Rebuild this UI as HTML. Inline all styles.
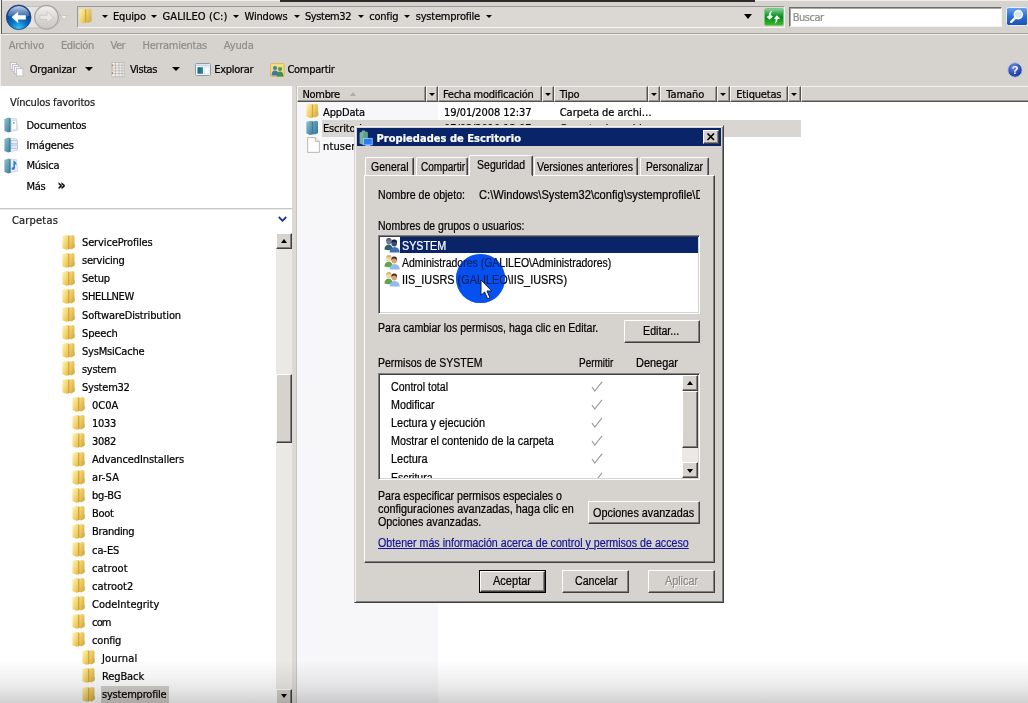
<!DOCTYPE html>
<html lang="es">
<head>
<meta charset="utf-8">
<title>systemprofile</title>
<style>
*{box-sizing:border-box;margin:0;padding:0}
html,body{width:1028px;height:703px;overflow:hidden;background:#fff}
body{position:relative;font-family:"DejaVu Sans Condensed","DejaVu Sans","Liberation Sans",sans-serif;font-size:11px;color:#000;line-height:14px}
#root{position:absolute;left:0;top:0;width:1028px;height:703px;overflow:hidden;will-change:transform}
.a{position:absolute}
.t{position:absolute;white-space:nowrap;line-height:14px;height:14px;transform-origin:0 50%;-webkit-text-stroke:0.22px currentColor}
svg{position:absolute;overflow:visible}
#chrome{left:0;top:0;width:1028px;height:86px;background:#d6d3ce}
.dd{position:absolute;width:0;height:0;border-left:3.5px solid transparent;border-right:3.5px solid transparent;border-top:4px solid #000}
.dd2{position:absolute;width:0;height:0;border-left:4.5px solid transparent;border-right:4.5px solid transparent;border-top:5px solid #000}
.dd0{position:absolute;width:0;height:0;border-left:3.1px solid transparent;border-right:3.1px solid transparent;border-top:3.6px solid #000}
.dd3{position:absolute;width:0;height:0;border-left:4px solid transparent;border-right:4px solid transparent;border-top:4.5px solid #000}
.btn{position:absolute;background:#d6d3ce;border:1px solid;border-color:#fff #404040 #404040 #fff;box-shadow:inset -1px -1px 0 #808080, inset 1px 1px 0 #d6d3ce}
.sunk{position:absolute;background:#fff;border:1px solid;border-color:#808080 #fff #fff #808080;box-shadow:inset 1px 1px 0 #404040, inset -1px -1px 0 #d6d3ce}
.hdr{position:absolute;top:86px;height:16px;background:#d6d3ce;border:1px solid;border-color:#f4f3f1 #55534f #55534f #f4f3f1;box-shadow:inset -1px -1px 0 #99968f}
.tab{position:absolute;background:#d6d3ce;border:1px solid;border-color:#fff #404040 transparent #fff;border-bottom:none;border-radius:2px 2px 0 0;box-shadow:inset -1px 0 0 #808080}
</style>
</head>
<body>
<svg width="0" height="0" style="left:-10px;top:-10px">
<defs>
<linearGradient id="gfl" x1="0" y1="0" x2="1" y2="1"><stop offset="0" stop-color="#fff4ba"/><stop offset="0.5" stop-color="#f5d974"/><stop offset="1" stop-color="#e0b548"/></linearGradient>
<linearGradient id="gfr" x1="0" y1="0" x2="1" y2="1"><stop offset="0" stop-color="#f8e08a"/><stop offset="0.55" stop-color="#e6bf54"/><stop offset="1" stop-color="#cf9f38"/></linearGradient>
<linearGradient id="gtl" x1="0" y1="0" x2="1" y2="1"><stop offset="0" stop-color="#8fc0c8"/><stop offset="0.55" stop-color="#5f9fb4"/><stop offset="1" stop-color="#3f7e96"/></linearGradient>
<linearGradient id="gtr" x1="0" y1="0" x2="1" y2="1"><stop offset="0" stop-color="#6aa7c4"/><stop offset="0.6" stop-color="#4a88b0"/><stop offset="1" stop-color="#356c94"/></linearGradient>
<symbol id="fold" viewBox="0 0 14 16">
<path d="M7.2,1.2 L11.3,0.4 L12.9,1.6 L12.9,13.6 L9.6,15.4 L7.2,14.8 Z" fill="url(#gfr)"/>
<path d="M12.2,9.5 L13.6,10 L13.6,12.6 L12.2,13.4 Z" fill="#b9c98a"/>
<path d="M0.4,1.6 L5.6,0.4 L7.2,1.2 L7.2,15.2 L4.4,15.8 L0.4,14.2 Z" fill="url(#gfl)"/>
<path d="M6.4,1 L7.6,1.3 L7.6,15 L6.4,15.4 Z" fill="#c99a32" opacity="0.85"/>
</symbol>
<symbol id="tfold" viewBox="0 0 14 16">
<path d="M7.2,1.2 L11.3,0.4 L12.9,1.6 L12.9,13.6 L9.6,15.4 L7.2,14.8 Z" fill="url(#gtr)"/>
<path d="M0.4,1.6 L5.6,0.4 L7.2,1.2 L7.2,15.2 L4.4,15.8 L0.4,14.2 Z" fill="url(#gtl)"/>
<path d="M6.4,1 L7.6,1.3 L7.6,15 L6.4,15.4 Z" fill="#2f6c88" opacity="0.75"/>
</symbol>
</defs>
</svg>
<div id="root">
<div id="chrome" class="a"></div>
<div class="a" style="left:0px;top:0px;width:1028px;height:1px;background:#efeeec;"></div>
<div class="a" style="left:0px;top:0px;width:1px;height:86px;background:#efeeec;"></div>
<div class="a" style="left:1px;top:0px;width:1px;height:34px;background:#5a5853;"></div>
<div class="a" style="left:280px;top:0px;width:475px;height:2px;background:#2c2b29;"></div>
<div class="a" style="left:2px;top:33px;width:1026px;height:1px;background:#a3a19c;"></div>
<div class="a" style="left:0px;top:34px;width:1028px;height:1px;background:#f1f0ee;"></div>
<svg style="left:4px;top:3px" width="70" height="30" viewBox="0 0 70 30">
<defs>
<radialGradient id="gb" cx="0.5" cy="0.95" r="0.75"><stop offset="0" stop-color="#39c4f5"/><stop offset="0.45" stop-color="#0a73c4"/><stop offset="1" stop-color="#0a3c8c"/></radialGradient>
<linearGradient id="gbh" x1="0" y1="0" x2="0" y2="1"><stop offset="0" stop-color="#fff" stop-opacity="0.75"/><stop offset="1" stop-color="#fff" stop-opacity="0.08"/></linearGradient>
<linearGradient id="gf" x1="0" y1="0" x2="0" y2="1"><stop offset="0" stop-color="#f3f2f0"/><stop offset="0.5" stop-color="#dcdad6"/><stop offset="1" stop-color="#c9c7c2"/></linearGradient>
</defs>
<rect x="4" y="3.5" width="52" height="21.5" rx="10.5" fill="#e6e4e0" stroke="#c3c0bb" stroke-width="1"/>
<circle cx="14.7" cy="14.3" r="12.3" fill="url(#gb)" stroke="#1d3f7c" stroke-width="0.8"/>
<path d="M3.6,12.8 A11.2,11.2 0 0 1 25.8,12.8 Q14.7,16.6 3.6,12.8 Z" fill="url(#gbh)"/>
<path d="M7.6,14.3 L14.2,8.4 L14.2,12.2 L21.8,12.2 L21.8,16.4 L14.2,16.4 L14.2,20.2 Z" fill="#fff"/>
<circle cx="42.5" cy="14.3" r="11.8" fill="url(#gf)" stroke="#a9a7a3" stroke-width="1.3"/>
<path d="M49.4,14.3 L43,8.6 L43,12.3 L35.8,12.3 L35.8,16.3 L43,16.3 L43,20 Z" fill="#e9e8e5" stroke="#c5c3bf" stroke-width="0.7"/>
<path d="M56.6,12.6 L63.6,12.6 L60.1,16.6 Z" fill="#f4f3f1" stroke="#b9b7b3" stroke-width="0.7"/>
</svg>
<div class="a" style="left:77px;top:6px;width:708px;height:22px;background:#dbd8d3;border:1px solid;border-color:#9a9893 #f3f2f0 #f8f7f6 #9a9893"></div>
<svg style="left:79px;top:7.55px" width="13.5" height="15.5"><use href="#fold"/></svg>
<div class="dd0" style="left:102.15px;top:14.8px;"></div>
<div class="dd0" style="left:150.9px;top:14.8px;"></div>
<div class="dd0" style="left:232.9px;top:14.8px;"></div>
<div class="dd0" style="left:293.65px;top:14.8px;"></div>
<div class="dd0" style="left:358.15px;top:14.8px;"></div>
<div class="dd0" style="left:404.4px;top:14.8px;"></div>
<div class="dd0" style="left:486.15px;top:14.8px;"></div>
<div class="dd2" style="left:743.9px;top:14.3px;"></div>
<svg style="left:763.5px;top:7.5px" width="20" height="18" viewBox="0 0 20 18">
<defs><linearGradient id="gg" x1="0" y1="0" x2="0" y2="1"><stop offset="0" stop-color="#8fd69a"/><stop offset="0.38" stop-color="#1d9a36"/><stop offset="0.55" stop-color="#0a8a1e"/><stop offset="1" stop-color="#42bb26"/></linearGradient></defs>
<rect x="0.5" y="0.5" width="19" height="17" rx="1.8" fill="url(#gg)" stroke="#7cc884" stroke-width="1"/>
<path d="M8.6,2.6 Q6.4,4.8 6.9,7 L9,8.6 L5.7,11.7 L2.6,9 L5,7.3 Q4.4,4 8.6,2.6 Z" fill="#fff" opacity="0.95"/>
<path d="M12.8,7.2 L16.3,10.7 L13.7,11 Q13.6,13.9 10.8,15.7 Q12,13 11.6,11 L9.8,10.8 Z" fill="#fff" opacity="0.95"/>
</svg>
<div class="a" style="left:789px;top:7px;width:213px;height:20px;background:#fff;border:1px solid;border-color:#6f6d69 #f4f3f1 #f4f3f1 #6f6d69;box-shadow:inset 1px 1px 0 #a9a7a2"></div>
<svg style="left:1006px;top:7px" width="22" height="19" viewBox="0 0 22 19">
<defs><linearGradient id="gs" x1="0" y1="0" x2="0" y2="1"><stop offset="0" stop-color="#6aa6f0"/><stop offset="0.5" stop-color="#2a6fd8"/><stop offset="1" stop-color="#1b4fb0"/></linearGradient></defs>
<rect x="0.5" y="0.5" width="21" height="18" rx="2" fill="url(#gs)" stroke="#e8eefc" stroke-width="1"/>
<circle cx="12.3" cy="7.6" r="4" fill="#cfe4ff" stroke="#fff" stroke-width="1.6"/>
<path d="M9.4,10.6 L5.2,14.8" stroke="#fff" stroke-width="2.4" stroke-linecap="round"/>
</svg>
<svg style="left:1007px;top:61.5px" width="16" height="16" viewBox="0 0 16 16">
<defs><radialGradient id="gh" cx="0.4" cy="0.3" r="0.8"><stop offset="0" stop-color="#6f8fe0"/><stop offset="0.6" stop-color="#2a4bb4"/><stop offset="1" stop-color="#1a2f86"/></radialGradient></defs>
<circle cx="8" cy="8" r="7.2" fill="url(#gh)" stroke="#b8c2e2" stroke-width="1"/>
<text x="8" y="12" text-anchor="middle" font-family="Liberation Sans, sans-serif" font-weight="bold" font-size="11" fill="#fff">?</text>
</svg>
<svg style="left:10px;top:62px" width="14" height="15" viewBox="0 0 14 15">
<rect x="0.5" y="0.5" width="6" height="7" fill="#f4f4f4" stroke="#b9b9c4" stroke-width="0.8"/>
<rect x="2.5" y="2.5" width="6" height="7" fill="#f4f4f4" stroke="#b9b9c4" stroke-width="0.8"/>
<rect x="4.5" y="4.5" width="6" height="7" fill="#f6f6f6" stroke="#b9b9c4" stroke-width="0.8"/>
<rect x="6.5" y="6.5" width="6.5" height="7.5" fill="#fafafa" stroke="#b9b9c4" stroke-width="0.8"/>
</svg>
<div class="dd3" style="left:85.3px;top:66.95px;"></div>
<svg style="left:111px;top:61.6px" width="14" height="15.4" viewBox="0 0 14 14" preserveAspectRatio="none">
<rect x="0.8" y="0.5" width="12.4" height="13" fill="#efeeec" stroke="#bdbbb6" stroke-width="0.8"/>
<path d="M4.5,0.5V13.5M8,0.5V13.5M11,0.5V13.5M1,3H13M1,5.5H13M1,8H13M1,10.5H13" stroke="#b4b2ad" stroke-width="0.7" fill="none"/>
<path d="M1.3,2.2V4M1.3,9V11" stroke="#c8665a" stroke-width="1"/>
<path d="M1.3,5.6V7.6" stroke="#d8c24a" stroke-width="1"/>
</svg>
<div class="dd3" style="left:172.25px;top:66.95px;"></div>
<svg style="left:194.5px;top:62.5px" width="16" height="13" viewBox="0 0 16 13">
<rect x="0.5" y="0.5" width="15" height="12" rx="1" fill="#f4f6f8" stroke="#8f9aa8" stroke-width="1"/>
<rect x="1.5" y="1.5" width="13" height="1.6" fill="#c8d4e4"/>
<rect x="2.4" y="4.2" width="5.6" height="6.6" fill="#2f8a78"/>
<rect x="3" y="4.8" width="2.6" height="5.4" fill="#2a5fae"/>
<rect x="9.6" y="4.2" width="4.4" height="6.6" fill="#fff" stroke="#c9d1dc" stroke-width="0.5"/>
</svg>
<svg style="left:269.5px;top:63px" width="15" height="14" viewBox="0 0 15 14">
<rect x="0.5" y="0.5" width="13.5" height="13" rx="1" fill="#f5dc7c" stroke="#d9b548" stroke-width="0.8"/>
<circle cx="5" cy="5" r="2.1" fill="#3f7fc0"/><path d="M1.6,12.6 Q1.6,7.6 5,7.6 Q8.4,7.6 8.4,12.6 Z" fill="#3a74b6"/>
<circle cx="10" cy="6" r="2.1" fill="#4a9a5a"/><path d="M6.6,13.4 Q6.6,8.6 10,8.6 Q13.4,8.6 13.4,13.4 Z" fill="#3f8f52"/>
</svg>
<div class="a" style="left:0px;top:86px;width:292px;height:617px;background:#fff;"></div>
<svg style="left:4px;top:117.0px" width="15" height="16" viewBox="0 0 15 16">
<path d="M5.6,1 L12.6,1.8 L13.6,13.2 L6,14.6 Z" fill="#e9edf2" stroke="#b9bec8" stroke-width="0.5"/>
<rect x="7.6" y="3.6" width="4.6" height="9" fill="#fff" stroke="#c9ccd4" stroke-width="0.5"/><rect x="9" y="5" width="1.6" height="1.6" fill="#6a9fd8"/>
<path d="M0.4,2 L4.6,0.6 L6.4,1.4 L6.4,14.8 L4.2,15.6 L0.4,14 Z" fill="url(#gtl)"/>
<path d="M5.4,1 L6.6,1.4 L6.6,14.8 L5.4,15.2 Z" fill="#2f6c88" opacity="0.7"/>
</svg>
<svg style="left:4px;top:137.0px" width="15" height="16" viewBox="0 0 15 16">
<path d="M5.6,1 L12.6,1.8 L13.6,13.2 L6,14.6 Z" fill="#e9edf2" stroke="#b9bec8" stroke-width="0.5"/>
<rect x="7" y="3.4" width="6.4" height="3.4" fill="#e8f0fa" stroke="#8fa8c8" stroke-width="0.5"/><rect x="7" y="8" width="6.4" height="3.6" fill="#dbe8f6" stroke="#8fa8c8" stroke-width="0.5"/>
<path d="M0.4,2 L4.6,0.6 L6.4,1.4 L6.4,14.8 L4.2,15.6 L0.4,14 Z" fill="url(#gtl)"/>
<path d="M5.4,1 L6.6,1.4 L6.6,14.8 L5.4,15.2 Z" fill="#2f6c88" opacity="0.7"/>
</svg>
<svg style="left:4px;top:157.5px" width="15" height="16" viewBox="0 0 15 16">
<path d="M5.6,1 L12.6,1.8 L13.6,13.2 L6,14.6 Z" fill="#e9edf2" stroke="#b9bec8" stroke-width="0.5"/>
<path d="M9.4,2.6 Q12.8,3.6 12.4,7.4 L11,6 L11,10 Q11,12 9,12 Q7.4,12 7.4,10.6 Q7.4,9.2 9,9.2 L9.4,9.2 Z" fill="#2f7fe0"/>
<path d="M0.4,2 L4.6,0.6 L6.4,1.4 L6.4,14.8 L4.2,15.6 L0.4,14 Z" fill="url(#gtl)"/>
<path d="M5.4,1 L6.6,1.4 L6.6,14.8 L5.4,15.2 Z" fill="#2f6c88" opacity="0.7"/>
</svg>
<div class="a" style="left:0px;top:208px;width:293px;height:1px;background:#c9c7c3;"></div>
<div class="a" style="left:0px;top:209px;width:293px;height:1px;background:#ecebe9;"></div>
<svg style="left:277.5px;top:215.5px" width="9" height="7" viewBox="0 0 9 7"><path d="M0.8,1 L4.5,4.8 L8.2,1" fill="none" stroke="#1a2f9c" stroke-width="1.8"/></svg>
<div class="a" style="left:100.5px;top:686px;width:68.5px;height:17px;background:#d3d0cb;"></div>
<svg style="left:62px;top:233.55px" width="13.5" height="16.5"><use href="#fold"/></svg>
<svg style="left:62px;top:251.63px" width="13.5" height="16.5"><use href="#fold"/></svg>
<svg style="left:62px;top:269.71px" width="13.5" height="16.5"><use href="#fold"/></svg>
<svg style="left:62px;top:287.79px" width="13.5" height="16.5"><use href="#fold"/></svg>
<svg style="left:62px;top:305.87px" width="13.5" height="16.5"><use href="#fold"/></svg>
<svg style="left:62px;top:323.95px" width="13.5" height="16.5"><use href="#fold"/></svg>
<svg style="left:62px;top:342.03px" width="13.5" height="16.5"><use href="#fold"/></svg>
<svg style="left:62px;top:360.11px" width="13.5" height="16.5"><use href="#fold"/></svg>
<svg style="left:62px;top:378.19px" width="13.5" height="16.5"><use href="#fold"/></svg>
<svg style="left:72px;top:396.27px" width="13.5" height="16.5"><use href="#fold"/></svg>
<svg style="left:72px;top:414.35px" width="13.5" height="16.5"><use href="#fold"/></svg>
<svg style="left:72px;top:432.43px" width="13.5" height="16.5"><use href="#fold"/></svg>
<svg style="left:72px;top:450.51px" width="13.5" height="16.5"><use href="#fold"/></svg>
<svg style="left:72px;top:468.59px" width="13.5" height="16.5"><use href="#fold"/></svg>
<svg style="left:72px;top:486.67px" width="13.5" height="16.5"><use href="#fold"/></svg>
<svg style="left:72px;top:504.75px" width="13.5" height="16.5"><use href="#fold"/></svg>
<svg style="left:72px;top:522.83px" width="13.5" height="16.5"><use href="#fold"/></svg>
<svg style="left:72px;top:540.91px" width="13.5" height="16.5"><use href="#fold"/></svg>
<svg style="left:72px;top:558.99px" width="13.5" height="16.5"><use href="#fold"/></svg>
<svg style="left:72px;top:577.07px" width="13.5" height="16.5"><use href="#fold"/></svg>
<svg style="left:72px;top:595.15px" width="13.5" height="16.5"><use href="#fold"/></svg>
<svg style="left:72px;top:613.23px" width="13.5" height="16.5"><use href="#fold"/></svg>
<svg style="left:72px;top:631.31px" width="13.5" height="16.5"><use href="#fold"/></svg>
<svg style="left:82px;top:649.39px" width="13.5" height="16.5"><use href="#fold"/></svg>
<svg style="left:82px;top:667.47px" width="13.5" height="16.5"><use href="#fold"/></svg>
<svg style="left:82px;top:685.55px" width="13.5" height="16.5"><use href="#fold"/></svg>
<div class="a" style="left:276px;top:233px;width:16px;height:470px;background:#ebe9e5;"></div>
<div class="btn" style="left:276px;top:233px;width:16px;height:16px"></div>
<div class="dd" style="left:280.5px;top:238.5px;border-top:none;border-bottom:4px solid #000"></div>
<div class="btn" style="left:276px;top:374px;width:16px;height:69px"></div>
<div class="btn" style="left:276px;top:689px;width:16px;height:16px"></div>
<div class="dd" style="left:280.5px;top:693.5px;"></div>
<div class="a" style="left:292px;top:86px;width:5px;height:617px;background:#dddad6;"></div>
<div class="a" style="left:296px;top:86px;width:1px;height:617px;background:#c8c5c0;"></div>
<div class="a" style="left:297px;top:102px;width:141px;height:601px;background:#f7f7f9;"></div>
<div class="a" style="left:438px;top:102px;width:590px;height:601px;background:#fff;"></div>
<div class="a" style="left:297px;top:86px;width:731px;height:16px;background:#d6d3ce;"></div>
<div class="hdr" style="left:297px;width:129px"></div>
<div class="hdr" style="left:426px;width:12px"></div>
<div class="dd0" style="left:428.9px;top:92.8px;"></div>
<div class="hdr" style="left:438px;width:104px"></div>
<div class="hdr" style="left:542px;width:12px"></div>
<div class="dd0" style="left:544.9px;top:92.8px;"></div>
<div class="hdr" style="left:554px;width:94px"></div>
<div class="hdr" style="left:648px;width:12px"></div>
<div class="dd0" style="left:650.9px;top:92.8px;"></div>
<div class="hdr" style="left:660px;width:57px"></div>
<div class="hdr" style="left:717px;width:13px"></div>
<div class="dd0" style="left:720.4px;top:92.8px;"></div>
<div class="hdr" style="left:730px;width:58px"></div>
<div class="hdr" style="left:788px;width:13px"></div>
<div class="dd0" style="left:791.4px;top:92.8px;"></div>
<div class="hdr" style="left:801px;width:229px"></div>
<div class="dd" style="left:349.5px;top:92px;border-top:none;border-bottom:4px solid #aeaba6"></div>
<div class="a" style="left:322px;top:120px;width:479px;height:17px;background:#d9d6d1;"></div>
<svg style="left:306.3px;top:102.55px" width="13" height="15.5"><use href="#fold"/></svg>
<svg style="left:306.3px;top:119.95px" width="13" height="15.5"><use href="#tfold"/></svg>
<svg style="left:307px;top:137px" width="13" height="16" viewBox="0 0 13 16">
<path d="M0.6,0.6 L8.4,0.6 L12.4,4.6 L12.4,15.4 L0.6,15.4 Z" fill="#fdfdfd" stroke="#b4b2ae" stroke-width="0.9"/>
<path d="M8.4,0.6 L8.4,4.6 L12.4,4.6" fill="#eceae6" stroke="#b4b2ae" stroke-width="0.8"/>
</svg>
<span class="t" style="left:113px;top:10.00px;letter-spacing:-0.193px;">Equipo</span>
<span class="t" style="left:162.5px;top:10.00px;letter-spacing:0.122px;">GALILEO (C:)</span>
<span class="t" style="left:244.5px;top:10.00px;letter-spacing:-0.165px;">Windows</span>
<span class="t" style="left:305px;top:10.00px;letter-spacing:-0.438px;">System32</span>
<span class="t" style="left:369.25px;top:10.00px;letter-spacing:-0.216px;">config</span>
<span class="t" style="left:415.75px;top:10.00px;letter-spacing:-0.213px;">systemprofile</span>
<span class="t" style="left:792.7px;top:11.00px;color:#8d8b87;letter-spacing:-0.466px;">Buscar</span>
<span class="t" style="left:8.75px;top:39.00px;color:#8f8d88;letter-spacing:-0.246px;">Archivo</span>
<span class="t" style="left:61px;top:39.00px;color:#8f8d88;letter-spacing:-0.438px;">Edición</span>
<span class="t" style="left:110.5px;top:39.00px;color:#8f8d88;letter-spacing:-0.526px;">Ver</span>
<span class="t" style="left:142.5px;top:39.00px;color:#8f8d88;letter-spacing:-0.242px;">Herramientas</span>
<span class="t" style="left:223.75px;top:39.00px;color:#8f8d88;letter-spacing:-0.100px;">Ayuda</span>
<span class="t" style="left:29.75px;top:63.00px;letter-spacing:-0.234px;">Organizar</span>
<span class="t" style="left:130px;top:63.00px;letter-spacing:-0.422px;">Vistas</span>
<span class="t" style="left:214.25px;top:63.00px;letter-spacing:-0.299px;">Explorar</span>
<span class="t" style="left:287.5px;top:63.00px;letter-spacing:-0.302px;">Compartir</span>
<span class="t" style="left:10px;top:96.00px;color:#1c1c1c;letter-spacing:-0.165px;">Vínculos favoritos</span>
<span class="t" style="left:26.5px;top:119.00px;letter-spacing:-0.273px;">Documentos</span>
<span class="t" style="left:26.5px;top:139.00px;letter-spacing:-0.160px;">Imágenes</span>
<span class="t" style="left:26.5px;top:159.00px;letter-spacing:-0.247px;">Música</span>
<span class="t" style="left:26.5px;top:180.00px;letter-spacing:-0.255px;">Más</span>
<span class="t" style="left:57.5px;top:177.60px;font-size:14px;font-weight:bold;letter-spacing:-0.170px;letter-spacing:0;">»</span>
<span class="t" style="left:12px;top:214.00px;color:#1c1c1c;letter-spacing:0.186px;">Carpetas</span>
<span class="t" style="left:82px;top:236.20px;letter-spacing:-0.131px;">ServiceProfiles</span>
<span class="t" style="left:82px;top:254.28px;letter-spacing:-0.241px;">servicing</span>
<span class="t" style="left:82px;top:272.36px;letter-spacing:-0.163px;">Setup</span>
<span class="t" style="left:82px;top:290.44px;letter-spacing:-0.307px;">SHELLNEW</span>
<span class="t" style="left:82px;top:308.52px;letter-spacing:-0.116px;">SoftwareDistribution</span>
<span class="t" style="left:82px;top:326.60px;letter-spacing:-0.128px;">Speech</span>
<span class="t" style="left:82px;top:344.68px;letter-spacing:-0.194px;">SysMsiCache</span>
<span class="t" style="left:82px;top:362.76px;letter-spacing:-0.297px;">system</span>
<span class="t" style="left:82px;top:380.84px;letter-spacing:-0.225px;">System32</span>
<span class="t" style="left:92px;top:398.92px;letter-spacing:0.030px;">0C0A</span>
<span class="t" style="left:92px;top:417.00px;letter-spacing:-0.297px;">1033</span>
<span class="t" style="left:92px;top:435.08px;letter-spacing:-0.297px;">3082</span>
<span class="t" style="left:92px;top:453.16px;letter-spacing:-0.109px;">AdvancedInstallers</span>
<span class="t" style="left:92px;top:471.24px;letter-spacing:0.207px;">ar-SA</span>
<span class="t" style="left:92px;top:489.32px;letter-spacing:-0.163px;">bg-BG</span>
<span class="t" style="left:92px;top:507.40px;letter-spacing:-0.270px;">Boot</span>
<span class="t" style="left:92px;top:525.48px;letter-spacing:-0.312px;">Branding</span>
<span class="t" style="left:92px;top:543.56px;letter-spacing:-0.065px;">ca-ES</span>
<span class="t" style="left:92px;top:561.64px;letter-spacing:0.057px;">catroot</span>
<span class="t" style="left:92px;top:579.72px;letter-spacing:-0.037px;">catroot2</span>
<span class="t" style="left:92px;top:597.80px;">CodeIntegrity</span>
<span class="t" style="left:92px;top:615.88px;letter-spacing:-0.814px;">com</span>
<span class="t" style="left:92px;top:633.96px;letter-spacing:-0.183px;">config</span>
<span class="t" style="left:102px;top:652.04px;letter-spacing:0.185px;">Journal</span>
<span class="t" style="left:102px;top:670.12px;letter-spacing:-0.112px;">RegBack</span>
<span class="t" style="left:102px;top:688.20px;letter-spacing:-0.201px;">systemprofile</span>
<span class="t" style="left:302.5px;top:88.00px;letter-spacing:-0.316px;">Nombre</span>
<span class="t" style="left:443px;top:88.00px;letter-spacing:-0.255px;">Fecha modificación</span>
<span class="t" style="left:559.7px;top:88.00px;letter-spacing:-0.299px;">Tipo</span>
<span class="t" style="left:666.3px;top:88.00px;letter-spacing:-0.055px;">Tamaño</span>
<span class="t" style="left:736.3px;top:88.00px;letter-spacing:-0.182px;">Etiquetas</span>
<span class="t" style="left:323px;top:106.00px;letter-spacing:-0.138px;">AppData</span>
<span class="t" style="left:444px;top:106.00px;letter-spacing:-0.080px;">19/01/2008 12:37</span>
<span class="t" style="left:559.7px;top:106.00px;letter-spacing:-0.017px;">Carpeta de archi…</span>
<span class="t" style="left:323px;top:122.00px;letter-spacing:-0.170px;">Escritorio</span>
<span class="t" style="left:444px;top:122.00px;letter-spacing:-0.080px;">07/02/2010 12:07</span>
<span class="t" style="left:559.7px;top:122.00px;letter-spacing:-0.017px;">Carpeta de archi…</span>
<span class="t" style="left:323px;top:140.00px;letter-spacing:-0.170px;letter-spacing:0.12px;">ntuser.dat</span>
<div class="a" style="left:354px;top:125px;width:370px;height:478px;background:#d6d3ce;border:1px solid;border-color:#d6d3ce #404040 #404040 #d6d3ce;box-shadow:inset 1px 1px 0 #f4f3f1, inset -1px -1px 0 #808080"></div>
<div class="a" style="left:357px;top:128px;width:364px;height:18px;background:#0a246a;"></div>
<svg style="left:359px;top:129.5px" width="14" height="16" viewBox="0 0 14 16">
<path d="M3,0.6 L6,0.6 L6,2 L3,2 Z" fill="#8fc6a4"/>
<path d="M0.6,2.4 L4.6,1.2 L8.6,2 L8.6,13.6 L4.4,15 L0.6,13.4 Z" fill="#76b59a"/>
<path d="M4.4,1.6 L8.6,2.2 L8.6,13.6 L4.4,14.8 Z" fill="#5fa08c"/>
<rect x="4.6" y="8.4" width="8.6" height="6.4" fill="#2a7cf0" stroke="#9ac4ff" stroke-width="0.9"/>
<rect x="6.4" y="15" width="5" height="1" fill="#9ac4ff"/>
</svg>
<div class="btn" style="left:703px;top:130px;width:16px;height:14px"></div>
<svg style="left:703px;top:130px" width="16" height="14" viewBox="0 0 16 14"><path d="M4.5,3.5 L11,10 M11,3.5 L4.5,10" stroke="#000" stroke-width="1.7" fill="none"/></svg>
<div class="a" style="left:364px;top:175px;width:351px;height:388px;background:#d6d3ce;border:1px solid;border-color:#fff #404040 #404040 #fff;box-shadow:inset -1px -1px 0 #808080"></div>
<div class="tab" style="left:365px;top:157px;width:49px;height:18px"></div>
<div class="tab" style="left:416px;top:157px;width:52px;height:18px"></div>
<div class="tab" style="left:534px;top:157px;width:104px;height:18px"></div>
<div class="tab" style="left:640px;top:157px;width:69px;height:18px"></div>
<div class="tab" style="left:469px;top:155px;width:64px;height:21px"></div>
<div class="a" style="left:470px;top:175px;width:62px;height:2px;background:#d6d3ce;"></div>
<div class="sunk" style="left:378px;top:235px;width:322px;height:79px"></div>
<div class="a" style="left:400px;top:237px;width:298px;height:16px;background:#0a246a;"></div>
<div class="a" style="left:456px;top:254px;width:48.5px;height:48.5px;border-radius:50%;background:#0650f0"></div>
<svg style="left:384px;top:237px" width="16" height="16" viewBox="0 0 16 16">
<path d="M0.4,12.6 Q0.6,8 4.8,7.6 Q8.4,8 8.6,12.6 Q4.6,14 0.4,12.6 Z" fill="#2f5f6a"/>
<ellipse cx="4.9" cy="4.3" rx="2.7" ry="3.2" fill="#6f7f9a"/>
<path d="M2.2,4 Q2.4,0.8 4.9,0.9 Q7.4,0.8 7.6,4 Q5,2.4 2.2,4 Z" fill="#56607a"/>
<path d="M5.6,15.6 Q5.8,10.4 10.4,10 Q15.4,10.4 15.8,15.6 Z" fill="#3f6fb0"/>
<ellipse cx="10.2" cy="6.2" rx="2.8" ry="3.3" fill="#3a4a78"/>
<path d="M7.4,6.2 Q7.2,2.4 10.2,2.6 Q13.4,2.4 13,6.4 Q12,4.2 10,4.4 Q8.2,4.4 7.4,6.2 Z" fill="#141c40"/>
</svg>
<svg style="left:384px;top:254px" width="16" height="16" viewBox="0 0 16 16">
<path d="M0.4,12.6 Q0.6,8 4.8,7.6 Q8.4,8 8.6,12.6 Q4.6,14 0.4,12.6 Z" fill="#62a44c"/>
<ellipse cx="4.9" cy="4.3" rx="2.7" ry="3.2" fill="#f0d9a8"/>
<path d="M2.2,4 Q2.4,0.8 4.9,0.9 Q7.4,0.8 7.6,4 Q5,2.4 2.2,4 Z" fill="#d8b868"/>
<path d="M5.6,15.6 Q5.8,10.4 10.4,10 Q15.4,10.4 15.8,15.6 Z" fill="#8fbcec"/>
<ellipse cx="10.2" cy="6.2" rx="2.8" ry="3.3" fill="#d9a578"/>
<path d="M7.4,6.2 Q7.2,2.4 10.2,2.6 Q13.4,2.4 13,6.4 Q12,4.2 10,4.4 Q8.2,4.4 7.4,6.2 Z" fill="#4a2f20"/>
</svg>
<svg style="left:384px;top:271px" width="16" height="16" viewBox="0 0 16 16">
<path d="M0.4,12.6 Q0.6,8 4.8,7.6 Q8.4,8 8.6,12.6 Q4.6,14 0.4,12.6 Z" fill="#62a44c"/>
<ellipse cx="4.9" cy="4.3" rx="2.7" ry="3.2" fill="#f0d9a8"/>
<path d="M2.2,4 Q2.4,0.8 4.9,0.9 Q7.4,0.8 7.6,4 Q5,2.4 2.2,4 Z" fill="#d8b868"/>
<path d="M5.6,15.6 Q5.8,10.4 10.4,10 Q15.4,10.4 15.8,15.6 Z" fill="#8fbcec"/>
<ellipse cx="10.2" cy="6.2" rx="2.8" ry="3.3" fill="#d9a578"/>
<path d="M7.4,6.2 Q7.2,2.4 10.2,2.6 Q13.4,2.4 13,6.4 Q12,4.2 10,4.4 Q8.2,4.4 7.4,6.2 Z" fill="#4a2f20"/>
</svg>
<div class="btn" style="left:624px;top:320px;width:76px;height:23px"></div>
<div class="sunk" style="left:378px;top:373px;width:322px;height:107px"></div>
<svg style="left:590.5px;top:380.5px" width="12" height="12" viewBox="0 0 12 12"><path d="M1,6.2 L3.8,10 L11,0.8" fill="none" stroke="#9c9a96" stroke-width="1.1"/></svg>
<svg style="left:590.5px;top:399px" width="12" height="12" viewBox="0 0 12 12"><path d="M1,6.2 L3.8,10 L11,0.8" fill="none" stroke="#9c9a96" stroke-width="1.1"/></svg>
<svg style="left:590.5px;top:416.5px" width="12" height="12" viewBox="0 0 12 12"><path d="M1,6.2 L3.8,10 L11,0.8" fill="none" stroke="#9c9a96" stroke-width="1.1"/></svg>
<svg style="left:590.5px;top:435px" width="12" height="12" viewBox="0 0 12 12"><path d="M1,6.2 L3.8,10 L11,0.8" fill="none" stroke="#9c9a96" stroke-width="1.1"/></svg>
<svg style="left:590.5px;top:453px" width="12" height="12" viewBox="0 0 12 12"><path d="M1,6.2 L3.8,10 L11,0.8" fill="none" stroke="#9c9a96" stroke-width="1.1"/></svg>
<svg style="left:590.5px;top:471.5px" width="12" height="12" viewBox="0 0 12 12"><path d="M1,6.2 L3.8,10 L11,0.8" fill="none" stroke="#9c9a96" stroke-width="1.1"/></svg>
<div class="a" style="left:682px;top:375px;width:16px;height:103px;background:#ebe9e5;"></div>
<div class="btn" style="left:682px;top:375px;width:16px;height:16px"></div>
<div class="dd" style="left:686.5px;top:380.5px;border-top:none;border-bottom:4px solid #000"></div>
<div class="btn" style="left:682px;top:391px;width:16px;height:57px"></div>
<div class="btn" style="left:682px;top:462px;width:16px;height:16px"></div>
<div class="dd" style="left:686.5px;top:468.5px;"></div>
<div class="btn" style="left:588px;top:501px;width:112px;height:23px"></div>
<div class="a" style="left:479px;top:570px;width:67px;height:23px;background:#000;"></div><div class="btn" style="left:480px;top:571px;width:65px;height:21px"></div>
<div class="btn" style="left:562px;top:570px;width:67px;height:23px"></div>
<div class="btn" style="left:648px;top:570px;width:67px;height:23px"></div>
<span class="t" style="left:376.5px;top:132.10px;color:#fff;font-weight:bold;letter-spacing:0.034px;">Propiedades de Escritorio</span>
<span class="t" style="left:371.25px;top:159.75px;font-family:'Liberation Sans',sans-serif;font-size:12px;transform:scaleX(0.8782);">General</span>
<span class="t" style="left:420.5px;top:159.75px;font-family:'Liberation Sans',sans-serif;font-size:12px;transform:scaleX(0.8351);">Compartir</span>
<span class="t" style="left:477px;top:158.00px;font-family:'Liberation Sans',sans-serif;font-size:12px;transform:scaleX(0.8772);">Seguridad</span>
<span class="t" style="left:537px;top:159.75px;font-family:'Liberation Sans',sans-serif;font-size:12px;transform:scaleX(0.8775);">Versiones anteriores</span>
<span class="t" style="left:645.5px;top:159.75px;font-family:'Liberation Sans',sans-serif;font-size:12px;transform:scaleX(0.8545);">Personalizar</span>
<span class="t" style="left:378px;top:188.00px;font-family:'Liberation Sans',sans-serif;font-size:12px;transform:scaleX(0.8812);">Nombre de objeto:</span>
<span class="t" style="left:378px;top:218.50px;font-family:'Liberation Sans',sans-serif;font-size:12px;transform:scaleX(0.8750);">Nombres de grupos o usuarios:</span>
<span class="t" style="left:402px;top:239.00px;font-family:'Liberation Sans',sans-serif;font-size:12px;color:#fff;transform:scaleX(0.8968);">SYSTEM</span>
<span class="t" style="left:402px;top:256.00px;font-family:'Liberation Sans',sans-serif;font-size:12px;transform:scaleX(0.8740);">Administradores (GALILEO\Administradores)</span>
<span class="t" style="left:402px;top:272.50px;font-family:'Liberation Sans',sans-serif;font-size:12px;transform:scaleX(0.9063);">IIS_IUSRS (GALILEO\IIS_IUSRS)</span>
<span class="t" style="left:378px;top:320.50px;font-family:'Liberation Sans',sans-serif;font-size:12px;transform:scaleX(0.8806);">Para cambiar los permisos, haga clic en Editar.</span>
<span class="t" style="left:643px;top:324.25px;font-family:'Liberation Sans',sans-serif;font-size:12px;transform:scaleX(0.8909);">Editar...</span>
<span class="t" style="left:378px;top:356.00px;font-family:'Liberation Sans',sans-serif;font-size:12px;transform:scaleX(0.8754);">Permisos de SYSTEM</span>
<span class="t" style="left:578.75px;top:356.00px;font-family:'Liberation Sans',sans-serif;font-size:12px;transform:scaleX(0.8284);">Permitir</span>
<span class="t" style="left:636px;top:356.00px;font-family:'Liberation Sans',sans-serif;font-size:12px;transform:scaleX(0.9124);">Denegar</span>
<span class="t" style="left:378px;top:488.50px;font-family:'Liberation Sans',sans-serif;font-size:12px;transform:scaleX(0.8842);">Para especificar permisos especiales o</span>
<span class="t" style="left:378px;top:501.75px;font-family:'Liberation Sans',sans-serif;font-size:12px;transform:scaleX(0.9057);">configuraciones avanzadas, haga clic en</span>
<span class="t" style="left:378px;top:515.00px;font-family:'Liberation Sans',sans-serif;font-size:12px;transform:scaleX(0.8947);">Opciones avanzadas.</span>
<span class="t" style="left:592.5px;top:505.50px;font-family:'Liberation Sans',sans-serif;font-size:12px;transform:scaleX(0.9034);">Opciones avanzadas</span>
<span class="t" style="left:378px;top:536.00px;font-family:'Liberation Sans',sans-serif;font-size:12px;color:#14149a;transform:scaleX(0.8891);text-decoration:underline;">Obtener más información acerca de control y permisos de acceso</span>
<span class="t" style="left:492.5px;top:573.75px;font-family:'Liberation Sans',sans-serif;font-size:12px;transform:scaleX(0.9188);">Aceptar</span>
<span class="t" style="left:574.5px;top:573.75px;font-family:'Liberation Sans',sans-serif;font-size:12px;transform:scaleX(0.8848);">Cancelar</span>
<span class="t" style="left:665px;top:573.75px;font-family:'Liberation Sans',sans-serif;font-size:12px;color:#8a8883;transform:scaleX(0.8995);text-shadow:1px 1px 0 #fff;">Aplicar</span>
<span class="t" style="left:478.75px;top:188.00px;font-family:'Liberation Sans',sans-serif;font-size:12px;transform:scaleX(0.9273);">C:\Windows\System32\config\systemprofile\D</span>
<span class="t" style="left:391px;top:379.50px;font-family:'Liberation Sans',sans-serif;font-size:12px;transform:scaleX(0.8809);">Control total</span>
<span class="t" style="left:391px;top:398.00px;font-family:'Liberation Sans',sans-serif;font-size:12px;transform:scaleX(0.8935);">Modificar</span>
<span class="t" style="left:391px;top:415.50px;font-family:'Liberation Sans',sans-serif;font-size:12px;transform:scaleX(0.9090);">Lectura y ejecución</span>
<span class="t" style="left:391px;top:434.00px;font-family:'Liberation Sans',sans-serif;font-size:12px;transform:scaleX(0.8970);">Mostrar el contenido de la carpeta</span>
<span class="t" style="left:391px;top:452.00px;font-family:'Liberation Sans',sans-serif;font-size:12px;transform:scaleX(0.9118);">Lectura</span>
<span class="t" style="left:391px;top:470.50px;font-family:'Liberation Sans',sans-serif;font-size:12px;transform:scaleX(0.8766);">Escritura</span>
<div class="a" style="left:380px;top:478px;width:302px;height:1px;background:#d6d3ce;"></div>
<div class="a" style="left:379px;top:479px;width:320px;height:1px;background:#fff;"></div>
<div class="a" style="left:378px;top:480px;width:323px;height:8px;background:#d6d3ce;"></div>
<div class="a" style="left:700px;top:186px;width:13px;height:18px;background:#d6d3ce;"></div>
<div class="a" style="left:0;top:660px;width:1028px;height:43px;background:linear-gradient(to bottom,rgba(0,0,0,0) 0%,rgba(0,0,0,0.06) 46%,rgba(0,0,0,0.10) 70%,rgba(0,0,0,0.185) 100%)"></div>
<div class="a" style="left:456px;top:254px;width:48.5px;height:48.5px;border-radius:50%;background:rgba(6,80,240,0.42)"></div>
<svg style="left:480px;top:279px" width="13" height="21" viewBox="0 0 13 21"><path d="M1,1 L1,16.4 L4.6,13 L7.6,19.8 L10,18.8 L7,12 L11.8,12 Z" fill="#fff" stroke="#0a1a50" stroke-width="1"/></svg>
</div>
</body>
</html>
